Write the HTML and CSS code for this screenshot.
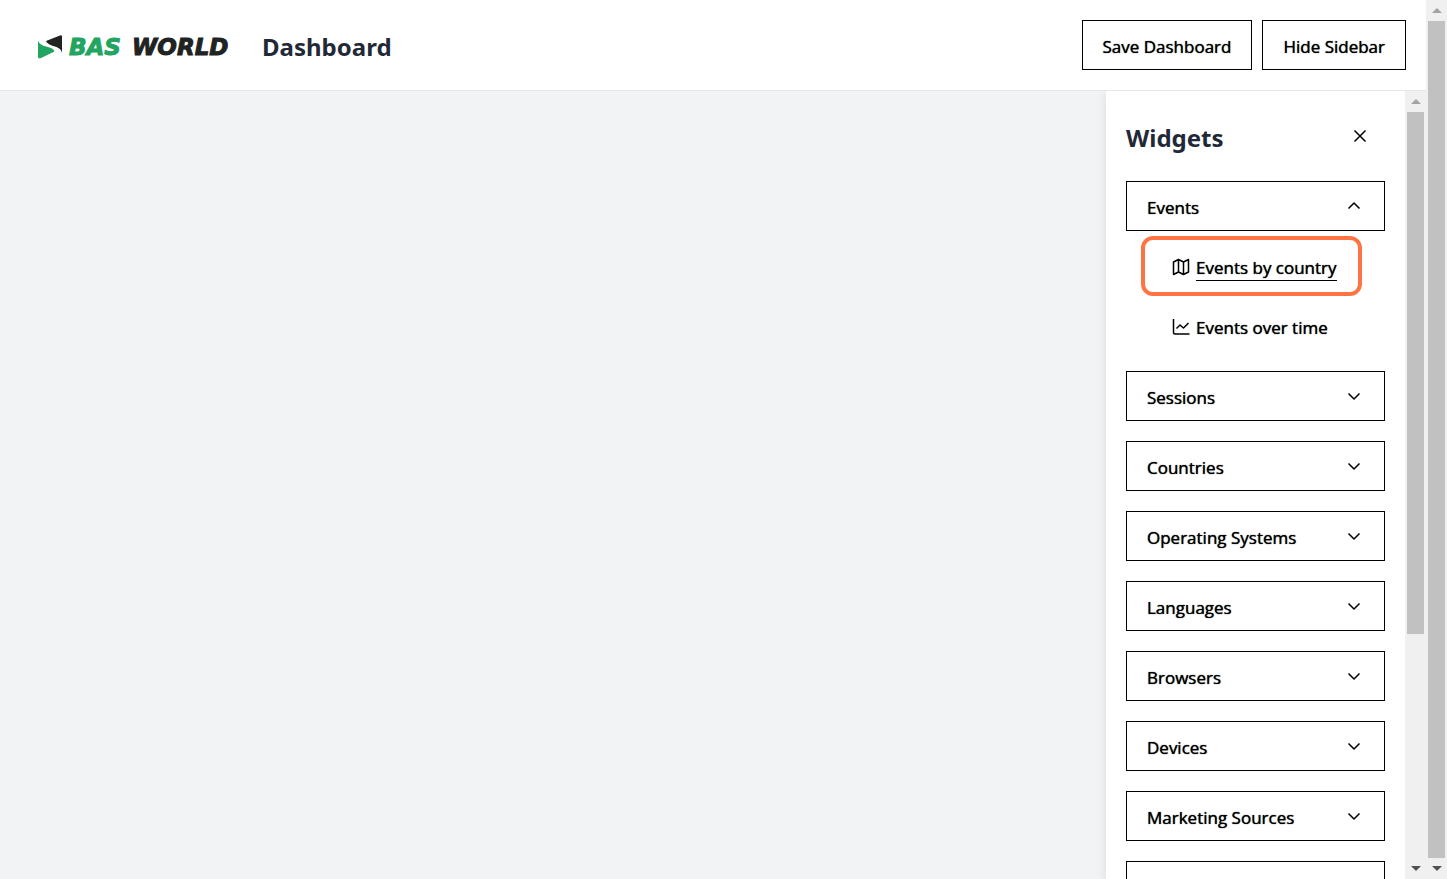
FILE: index.html
```html
<!DOCTYPE html>
<html lang="en">
<head>
<meta charset="utf-8">
<title>Dashboard</title>
<meta name="viewport" content="width=device-width, initial-scale=1">
<link rel="stylesheet" href="styles.css">
</head>
<body>
<svg class="defs" aria-hidden="true">
  <symbol id="down" viewBox="0 0 18 18"><path d="M3.500 6.500 9 12l5.500-5.500"/></symbol>
  <symbol id="up" viewBox="0 0 18 18"><path d="M3.500 11.500 9 6l5.500 5.500"/></symbol>
</svg>
<div class="page">
  <header class="topbar">
    <a class="logo" href="#" aria-label="BAS World">
      <svg class="mark" viewBox="0 0 24 24" aria-hidden="true">
        <path d="M8 6 22 .5q2-.6 2 1.300V18q-.5-4-5.500-6Q9 9.500 8 6Z" fill="#20231f"/>
        <path d="M0 5.500Q1 9.500 8 11.500q8 1.500 8.500 5L2.500 23.300Q0 24 0 21.500Z" fill="#22a560"/>
      </svg>
      <span class="bas">BAS</span>
      <span class="world">WORLD</span>
    </a>
    <h1 class="title">Dashboard</h1>
    <div class="actions">
      <button class="btn" type="button">Save Dashboard</button>
      <button class="btn" type="button">Hide Sidebar</button>
    </div>
  </header>
  <div class="body">
    <main class="canvas"></main>
    <aside class="sidebar">
      <div class="panel">
        <div class="panel-head">
          <h2 class="title">Widgets</h2>
          <button class="close" type="button" aria-label="Close"><svg class="icon" viewBox="0 0 18 18"><path d="M3.500 3.500l11 11M14.500 3.500l-11 11"/></svg></button>
        </div>
        <section>
          <button class="group" type="button" aria-expanded="true">Events<svg class="icon"><use href="#up"/></svg></button>
          <ul class="items">
            <li class="item picked"><a class="link" href="#"><svg class="icon" viewBox="0 0 18 18"><path d="M1.500 4 6.500 1.500l5 2.500 5-2.500v12.500l-5 2.500-5-2.500-5 2.500ZM6.500 1.500v12.500M11.500 4v12.500"/></svg><span class="label">Events by country</span></a></li>
            <li class="item"><a class="link" href="#"><svg class="icon" viewBox="0 0 18 18"><path d="M1.500 1v13.500q0 1.500 1.500 1.500H17.500M4.500 10.500 8 7l3.500 3 5-5"/></svg><span class="label">Events over time</span></a></li>
          </ul>
        </section>
        <button class="group" type="button">Sessions<svg class="icon"><use href="#down"/></svg></button>
        <button class="group" type="button">Countries<svg class="icon"><use href="#down"/></svg></button>
        <button class="group" type="button">Operating Systems<svg class="icon"><use href="#down"/></svg></button>
        <button class="group" type="button">Languages<svg class="icon"><use href="#down"/></svg></button>
        <button class="group" type="button">Browsers<svg class="icon"><use href="#down"/></svg></button>
        <button class="group" type="button">Devices<svg class="icon"><use href="#down"/></svg></button>
        <button class="group" type="button">Marketing Sources<svg class="icon"><use href="#down"/></svg></button>
        <button class="group" type="button" aria-label="More widgets"></button>
      </div>
      <div class="scrollbar" aria-hidden="true"><span class="arrow arrow-up"></span><div class="track"><div class="thumb thumb-part"></div></div><span class="arrow arrow-down"></span></div>
    </aside>
  </div>
</div>
<div class="scrollbar" aria-hidden="true"><span class="arrow arrow-up"></span><div class="track"><div class="thumb"></div></div><span class="arrow arrow-down"></span></div>
</body>
</html>
```
FILE: styles.css
```css
* { box-sizing: border-box; }
body {
  margin: 0;
  height: 100vh;
  display: flex;
  overflow: hidden;
  background: #fff;
  color: #000;
  font: 500 17px/24px "Segoe UI", "Open Sans", "Noto Sans", sans-serif;
}
.defs { position: absolute; width: 0; height: 0; }
.page { flex: 1; min-width: 0; display: flex; flex-direction: column; }
.topbar {
  display: flex;
  align-items: center;
  height: 91px;
  padding: 3px 20px 0 38px;
  border-bottom: 1px solid #e5e7eb;
}
.logo {
  display: flex;
  align-items: center;
  width: 224px;
  color: #20231f;
  text-decoration: none;
  font: italic 700 23px/24px "DejaVu Sans", sans-serif;
}
.mark { width: 24px; height: 24px; margin-right: 7px; }
.bas { width: 63px; color: #22a560; -webkit-text-stroke: 1px #22a560; }
.world { -webkit-text-stroke: 1px #20231f; }
.title { margin: 0; font: 700 24px/34px "Segoe UI", "Noto Sans", sans-serif; color: #1f2937; }
.actions { display: flex; gap: 10px; margin: 0 0 3px auto; }
button { font: inherit; color: inherit; background: #fff; border: 0; padding: 0; }
.btn, .group, .label { text-shadow: 0 0 1px #000; }
.btn { height: 50px; padding: 3px 20px 0; border: 1px solid #000; }
.body { flex: 1; min-height: 0; display: flex; }
.canvas { flex: 1; background: #f2f3f5; }
.sidebar { width: 320px; display: flex; background: #fff; box-shadow: 0 2px 10px rgba(0, 0, 0, .1); clip-path: inset(0 0 0 -16px); }
.panel { flex: 1; min-width: 0; padding: 30px 20px 0; display: flex; flex-direction: column; gap: 20px; overflow: hidden; }
.panel-head { display: flex; justify-content: space-between; height: 40px; flex: none; padding-right: 16px; align-items: flex-start; }
.panel section { flex: none; }
.close { display: flex; padding: 6px 0; }
.icon { width: 18px; height: 18px; flex: none; fill: none; stroke: #000; stroke-width: 1.5; stroke-linejoin: round; }
.group {
  width: 100%;
  height: 50px;
  flex: none;
  display: flex;
  align-items: center;
  justify-content: space-between;
  padding: 3px 21px 0 20px;
  border: 1px solid #000;
  text-align: left;
}
.group .icon, .link .icon { margin-bottom: 3px; }
.items { list-style: none; margin: 0; padding: 0 23px 0 15px; }
.item { height: 60px; padding: 14px 31px 0; display: flex; align-items: center; position: relative; }
.picked::after { content: ""; position: absolute; inset: 5px 0 -5px; border: 4px solid #ff7442; border-radius: 12px; }
.link { display: flex; gap: 6px; align-items: center; color: #000; text-decoration: none; white-space: nowrap; }
.label { border-bottom: 1px solid transparent; }
.picked .label { border-color: #000; }
.scrollbar { width: 21px; flex: none; display: flex; flex-direction: column; background: #f0f0f0; }
.arrow { height: 21px; display: flex; align-items: center; justify-content: center; }
.arrow::before { content: ""; border: 5px solid transparent; }
.arrow-up::before { border-top: 0; border-bottom-color: #a3a3a3; }
.arrow-down::before { border-bottom: 0; border-top-color: #505050; }
.track { flex: 1; padding: 0 2px; }
.thumb { height: 100%; background: #c1c1c1; }
.thumb-part { height: 70%; }
```
